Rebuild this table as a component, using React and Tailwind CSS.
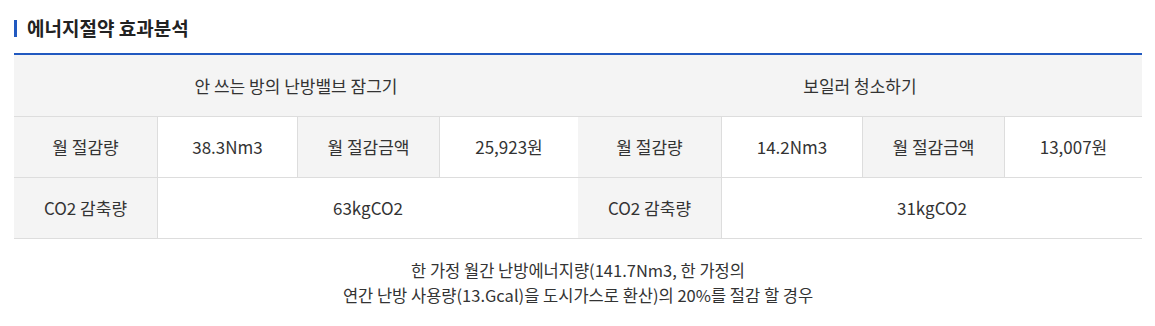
export default function App() {
  const font = { fontFamily: '"Noto Sans CJK KR", "Noto Sans", sans-serif' };
  const th = 'h-[60px] flex items-center justify-center bg-[#f4f4f4]';
  const td = 'h-[60px] flex items-center justify-center bg-white border-l border-[#dddddd]';
  const cols = 'grid grid-cols-[143px_140px_142px_139px_143px_141px_142px_138px] border-b border-[#dddddd]';

  const sides = [
    { title: '안 쓰는 방의 난방밸브 잠그기', amount: '38.3Nm3', money: '25,923원', co2: '63kgCO2' },
    { title: '보일러 청소하기', amount: '14.2Nm3', money: '13,007원', co2: '31kgCO2' },
  ];

  return (
    <div className="w-[1155px] h-[326px] bg-white pl-[14px] pr-[13px] pt-[15px] text-[#333333]" style={font}>
      {/* section title */}
      <div className="flex items-center h-[27px]">
        <span className="w-[3px] h-[17px] bg-[#2159c0]" />
        <h2 className="ml-[10px] text-[19px] font-bold text-[#222222]">
          에너지절약 효과분석
        </h2>
      </div>

      <div className="mt-[11px] border-t-2 border-[#2159c0] text-[17px]">
        <div className="grid grid-cols-2 border-b border-[#dddddd]">
          {sides.map((s) => (
            <div key={s.title} className={th + ' h-[61px]'}>{s.title}</div>
          ))}
        </div>

        <div className={cols}>
          {sides.map((s) => (
            <div key={s.amount} className="contents">
              <div className={th}>월 절감량</div>
              <div className={td}>{s.amount}</div>
              <div className={th + ' border-l border-[#dddddd]'}>월 절감금액</div>
              <div className={td}>{s.money}</div>
            </div>
          ))}
        </div>

        <div className={cols}>
          {sides.map((s) => (
            <div key={s.co2} className="contents">
              <div className={th}>CO2 감축량</div>
              <div className={td + ' col-span-3'}>{s.co2}</div>
            </div>
          ))}
        </div>
      </div>

      <p className="pt-[19px] text-center text-[16.5px] leading-[25px]">
        한 가정 월간 난방에너지량(141.7Nm3, 한 가정의
        <br />
        연간 난방 사용량(13.Gcal)을 도시가스로 환산)의 20%를 절감 할 경우
      </p>
    </div>
  );
}
